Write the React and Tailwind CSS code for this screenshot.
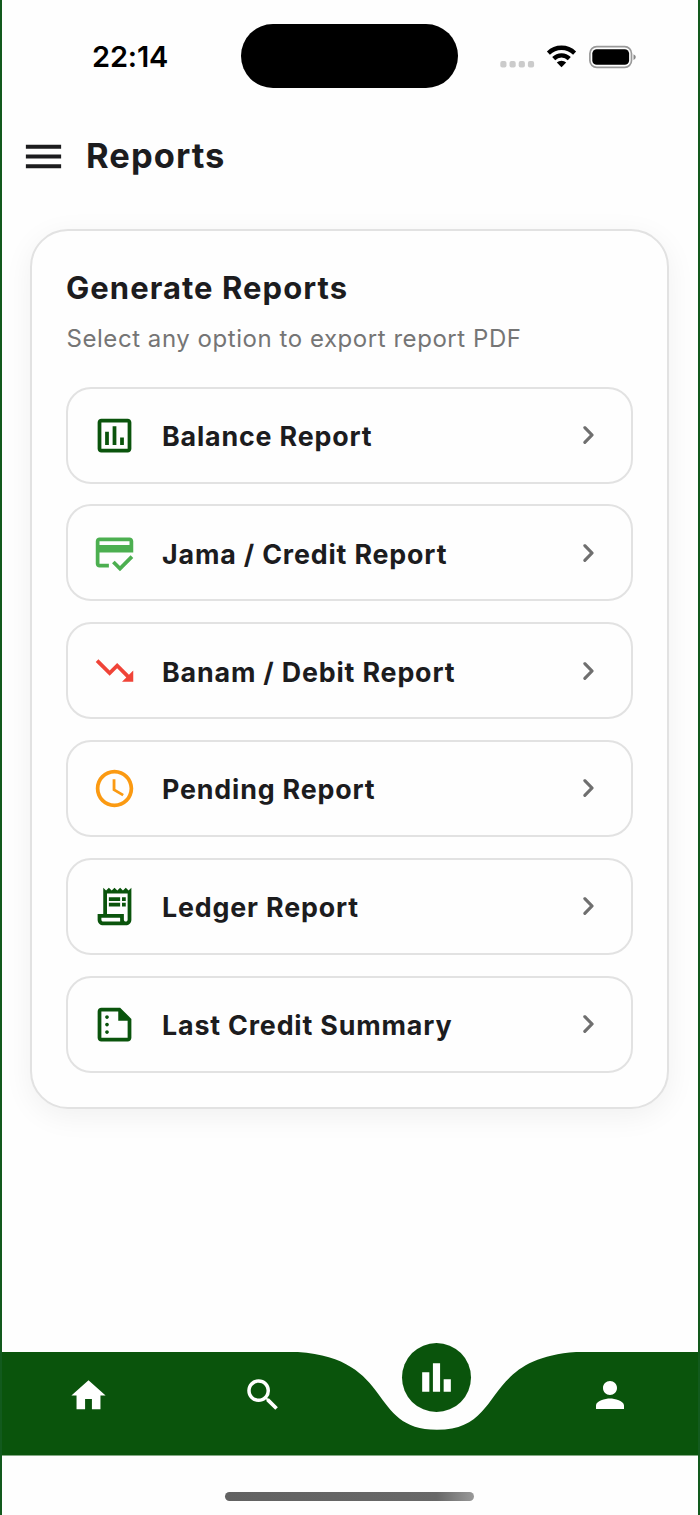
import {
  MdAccessTime,
  MdBarChart,
  MdHome,
  MdMenu,
  MdOutlineCreditScore,
  MdOutlineInsertChart,
  MdOutlineReceiptLong,
  MdOutlineSummarize,
  MdPerson,
  MdSearch,
  MdTrendingDown,
} from 'react-icons/md';

const reports = [
  { label: 'Balance Report', Icon: MdOutlineInsertChart, color: 'text-[#0a540c]' },
  { label: 'Jama / Credit Report', Icon: MdOutlineCreditScore, color: 'text-[#4caf50]' },
  { label: 'Banam / Debit Report', Icon: MdTrendingDown, color: 'text-[#f04438]' },
  { label: 'Pending Report', Icon: MdAccessTime, color: 'text-[#fb9a12]' },
  { label: 'Ledger Report', Icon: MdOutlineReceiptLong, color: 'text-[#0a540c]' },
  { label: 'Last Credit Summary', Icon: MdOutlineSummarize, color: 'text-[#0a540c]' },
];

function StatusBar() {
  return (
    <div className="flex h-[113px] items-center text-black">
      <div className="w-[239px] pl-[90px] text-[29px] font-semibold tracking-[-0.15px]">22:14</div>
      <div className="mb-px h-16 w-[217px] rounded-full bg-black" />
      <svg className="mb-[2px] ml-[41px]" width="140" height="32" viewBox="0 0 140 32" fill="currentColor">
        <g fill="#cbcbcb">
          <rect x="1.3" y="21" width="6.2" height="6.4" rx="2" />
          <rect x="10.5" y="21" width="6.2" height="6.4" rx="2" />
          <rect x="19.7" y="21" width="6.2" height="6.4" rx="2" />
          <rect x="28.9" y="21" width="6.2" height="6.4" rx="2" />
        </g>
        <g fill="none" stroke="currentColor" strokeWidth="4.3">
          <path d="M49.4 13.1a18.7 18.7 0 0 1 26.2 0" />
          <path d="M54.7 18.6a11.1 11.1 0 0 1 15.6 0" />
        </g>
        <path d="M57.8 22.6a6.8 6.8 0 0 1 9.4 0L62.5 27.3Z" />
        <rect x="90.9" y="6.7" width="41.6" height="20.6" rx="6.8" fill="none" stroke="#999" strokeWidth="1.7" />
        <rect x="93.3" y="9.2" width="36.8" height="15.6" rx="4.4" />
        <path d="M134.5 14.2q2.3 1 2.3 2.9t-2.3 2.9Z" fill="#888" />
      </svg>
    </div>
  );
}

function ReportRow({ label, Icon, color }) {
  return (
    <button className="flex h-[97px] items-center rounded-[25px] border-2 border-[#e2e2e2] pl-[24px] pr-[24px] text-left">
      <Icon className={`size-[45px] shrink-0 ${color}`} />
      <span className="ml-[25px] grow pt-[2px] text-[26.8px] font-bold tracking-[0.84px] text-[#1c1c1e]">{label}</span>
      <svg className="size-[38px] text-[#6f6f6f]" viewBox="0 0 24 24" fill="currentColor">
        <path d="M9.29 6.71a.996.996 0 0 0 0 1.41L13.17 12l-3.88 3.88a.996.996 0 1 0 1.41 1.41l4.59-4.59a.996.996 0 0 0 0-1.41L10.7 6.7c-.38-.38-1.02-.38-1.41.01z" />
      </svg>
    </button>
  );
}

function BottomNav() {
  return (
    <nav className="relative h-[104px] text-white">
      <svg className="absolute inset-0" width="696" height="104" viewBox="0 0 696 104">
        <path
          fill="#0a540c"
          d="M0 0H295.8C393.2 6.5 365.4 77.7 435 77.7C504.6 77.7 476.8 6.5 574.2 0H696V103.6H0Z"
        />
      </svg>
      <div className="relative grid h-[86px] w-[695px] grid-cols-4 place-items-center">
        <MdHome className="size-[41px]" />
        <MdSearch className="size-[42px]" />
        <div className="relative -top-[18px] grid size-[69px] place-items-center rounded-full bg-[#0a540c]">
          <MdBarChart className="size-[43px]" />
        </div>
        <MdPerson className="size-[42px]" />
      </div>
    </nav>
  );
}

export default function App() {
  return (
    <div className="flex h-[1515px] w-[700px] flex-col overflow-hidden border-x-2 border-[#125a1d] bg-[#fefefe] font-['Inter',sans-serif]">
      <StatusBar />
      <header className="flex h-[86px] items-center pl-[18px] text-[#1c1c1e]">
        <MdMenu className="size-[47px]" />
        <h1 className="ml-[19px] text-[34.5px] font-bold tracking-[1.05px]">Reports</h1>
      </header>
      <main className="grow pr-[29px] pl-[28px] pt-[30px]">
        <section className="h-[880px] rounded-[38px] border-2 border-[#e2e2e2] bg-[#fefefe] px-[34px] pt-[34px] shadow-[0_7px_30px_rgba(0,0,0,0.06)]">
          <h2 className="text-[31px] leading-[46px] font-bold tracking-[1.05px] text-[#1c1c1e]">Generate Reports</h2>
          <p className="mt-[10px] ml-[0.5px] text-[24px] leading-[36px] tracking-[0.55px] text-[#757575]">
            Select any option to export report PDF
          </p>
          <div className="mt-[29.6px] flex flex-col gap-[20.8px]">
            {reports.map((report) => (
              <ReportRow key={report.label} {...report} />
            ))}
          </div>
        </section>
      </main>
      <BottomNav />
      <footer className="flex h-[59px] justify-center pt-[36px] pr-px">
        <div className="h-[9px] w-[249px] rounded-full bg-linear-to-r from-[#626262] via-[#686868] via-85% to-[#999]" />
      </footer>
    </div>
  );
}
